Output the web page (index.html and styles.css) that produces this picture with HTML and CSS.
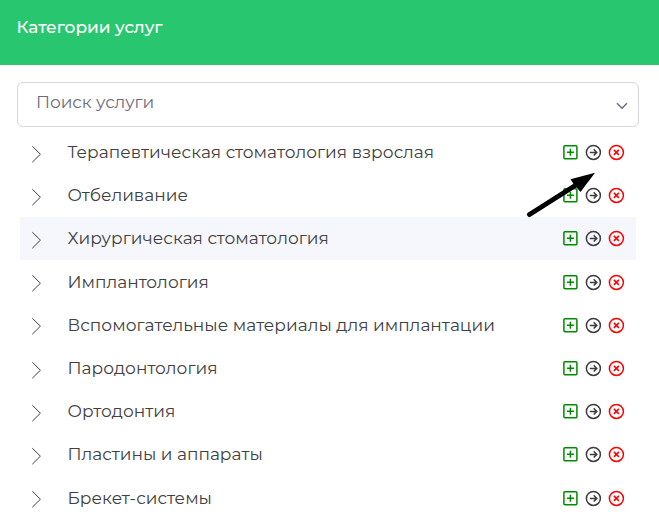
FILE: index.html
```html
<!DOCTYPE html>
<html lang="ru">
<head>
<meta charset="utf-8">
<title>Категории услуг</title>
<link rel="stylesheet" href="styles.css">
</head>
<body>
<svg class="sprite" aria-hidden="true">
  <symbol id="chevron" viewBox="0 0 12 18"><path d="M1.3 1.2 9.4 9.2 1.3 17.2"/></symbol>
  <symbol id="plus" viewBox="0 0 18 18"><rect x="2.9" y="2.8" width="13" height="13" rx="1"/><path d="M9.4 5.8v7M5.9 9.3h7"/></symbol>
  <symbol id="move" viewBox="0 0 18 18"><circle cx="9.4" cy="9.4" r="7"/><path d="M5.8 9.4h7M9.7 6.3l3.1 3.1-3.1 3.1"/></symbol>
  <symbol id="remove" viewBox="0 0 18 18"><circle cx="9.4" cy="9.4" r="7"/><path d="m6.9 6.9 5 5M11.9 6.9l-5 5"/></symbol>
</svg>
<header class="header"><h1 class="title">Категории услуг</h1></header>
<main class="content">
  <div class="search">
    <span class="placeholder">Поиск услуги</span>
    <svg class="caret" viewBox="0 0 12 8"><path d="m1 1.3 5 5 5-5"/></svg>
  </div>
  <ul class="list">
    <li class="row"><svg class="chevron"><use href="#chevron"/></svg><span class="name">Терапевтическая стоматология взрослая</span><svg class="icon add"><use href="#plus"/></svg><svg class="icon move"><use href="#move"/></svg><svg class="icon remove"><use href="#remove"/></svg></li>
    <li class="row"><svg class="chevron"><use href="#chevron"/></svg><span class="name">Отбеливание</span><svg class="icon add"><use href="#plus"/></svg><svg class="icon move"><use href="#move"/></svg><svg class="icon remove"><use href="#remove"/></svg></li>
    <li class="row active"><svg class="chevron"><use href="#chevron"/></svg><span class="name">Хирургическая стоматология</span><svg class="icon add"><use href="#plus"/></svg><svg class="icon move"><use href="#move"/></svg><svg class="icon remove"><use href="#remove"/></svg></li>
    <li class="row"><svg class="chevron"><use href="#chevron"/></svg><span class="name">Имплантология</span><svg class="icon add"><use href="#plus"/></svg><svg class="icon move"><use href="#move"/></svg><svg class="icon remove"><use href="#remove"/></svg></li>
    <li class="row"><svg class="chevron"><use href="#chevron"/></svg><span class="name">Вспомогательные материалы для имплантации</span><svg class="icon add"><use href="#plus"/></svg><svg class="icon move"><use href="#move"/></svg><svg class="icon remove"><use href="#remove"/></svg></li>
    <li class="row"><svg class="chevron"><use href="#chevron"/></svg><span class="name">Пародонтология</span><svg class="icon add"><use href="#plus"/></svg><svg class="icon move"><use href="#move"/></svg><svg class="icon remove"><use href="#remove"/></svg></li>
    <li class="row"><svg class="chevron"><use href="#chevron"/></svg><span class="name">Ортодонтия</span><svg class="icon add"><use href="#plus"/></svg><svg class="icon move"><use href="#move"/></svg><svg class="icon remove"><use href="#remove"/></svg></li>
    <li class="row"><svg class="chevron"><use href="#chevron"/></svg><span class="name">Пластины и аппараты</span><svg class="icon add"><use href="#plus"/></svg><svg class="icon move"><use href="#move"/></svg><svg class="icon remove"><use href="#remove"/></svg></li>
    <li class="row"><svg class="chevron"><use href="#chevron"/></svg><span class="name">Брекет-системы</span><svg class="icon add"><use href="#plus"/></svg><svg class="icon move"><use href="#move"/></svg><svg class="icon remove"><use href="#remove"/></svg></li>
  </ul>
</main>
<svg class="pointer" viewBox="0 0 70 46"><path class="shaft" d="M3.5 42.5 50 13"/><path class="head" d="M69 .7 44.5 7.2l2.8 4.3L54.5 20z"/></svg>
</body>
</html>
```
FILE: styles.css
```css
* { box-sizing: border-box; }
body {
  margin: 0;
  height: 523px;
  overflow: hidden;
  position: relative;
  background: #fff;
  color: #404040;
  font-family: Montserrat, Inter, sans-serif;
  font-size: 17px;
}
.sprite { display: none; }
svg { fill: none; stroke: currentColor; flex: none; }
.header {
  height: 65px;
  padding: 17px 16.5px 0;
  background: #28c76f;
}
.title {
  margin: 0;
  color: #fff;
  font-size: 17px;
  font-weight: 500;
  line-height: 21px;
  letter-spacing: -.06px;
}
.content { padding: 17px 20px 0 17px; }
.search {
  display: flex;
  align-items: center;
  justify-content: space-between;
  height: 45px;
  padding: 0 10px 0 18px;
  border: 1px solid #d8d6de;
  border-radius: 6px;
  color: #6e6b7b;
}
.placeholder { line-height: 21px; padding-bottom: 4px; letter-spacing: -.06px; }
.caret { width: 12px; height: 8px; margin-top: 2px; stroke-width: 1.5; }
.list {
  margin: 3.85px 3px 0;
  padding: 0;
  list-style: none;
}
.row {
  display: flex;
  align-items: center;
  height: 43.2px;
  padding-right: 11px;
}
.row.active { background: #f6f7fc; }
.chevron { width: 12px; height: 18px; margin: 2.3px 24.5px 0 11px; stroke-width: 1; }
.name { flex: 1; margin-top: .3px; line-height: 21px; letter-spacing: .025px; white-space: nowrap; }
.icon { width: 18px; height: 18px; margin: -.7px 0 0 5px; stroke-width: 1.5; }
.add { color: #008a00; }
.move { color: #3c3c40; }
.remove { color: #f00; }
.pointer { position: absolute; left: 526px; top: 172px; width: 70px; height: 46px; color: #000; }
.shaft { stroke-width: 5; stroke-linecap: round; }
.head { fill: currentColor; stroke: none; }
```
